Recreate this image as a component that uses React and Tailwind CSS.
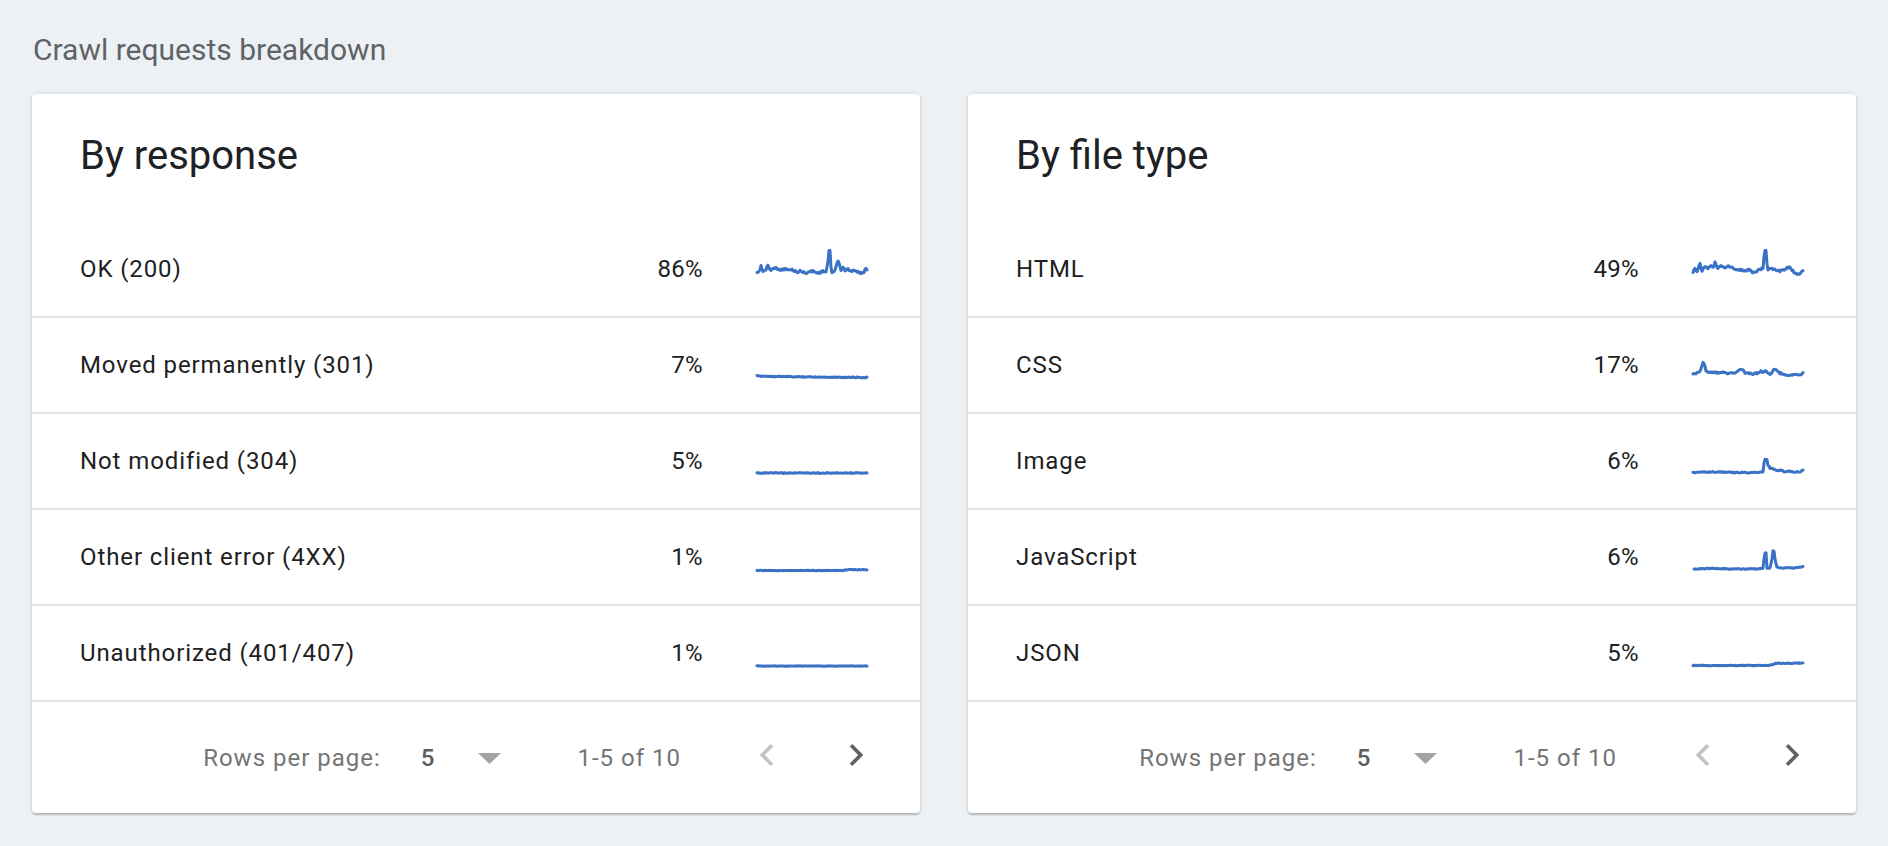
import React from 'react';

const FONT = { fontFamily: 'Roboto, "Liberation Sans", Arial, sans-serif' };

// key points [x, y] in a 110x40 box, jitter added for the noisy look
const byResponse = [
  {
    label: 'OK (200)',
    pct: '86%',
    amp: 2,
    pts: [[0, 24], [3, 21], [4, 17], [6, 22], [9, 21], [11, 16], [13, 21], [16, 20], [19, 18], [22, 21], [28, 20], [32, 21], [36, 21], [40, 23], [44, 22], [48, 24], [52, 23], [56, 22], [60, 24], [64, 23], [67, 22], [69, 23], [71, 12], [72, 1], [73, 1], [74, 18], [75, 24], [77, 22], [79, 18], [81, 12], [82, 14], [84, 21], [86, 18], [88, 22], [91, 20], [94, 22], [97, 21], [100, 23], [104, 24], [107, 23], [109, 19], [110, 20]],
  },
  { label: 'Moved permanently (301)', pct: '7%', amp: 0.8, pts: [[0, 31], [20, 31.5], [60, 32], [110, 32.5]] },
  { label: 'Not modified (304)', pct: '5%', amp: 0.8, pts: [[0, 32], [110, 32]] },
  { label: 'Other client error (4XX)', pct: '1%', amp: 0.5, pts: [[0, 33.5], [85, 33.5], [90, 32.7], [110, 32.7]] },
  { label: 'Unauthorized (401/407)', pct: '1%', amp: 0.4, pts: [[0, 33], [110, 33]] },
];

const byFileType = [
  {
    label: 'HTML',
    pct: '49%',
    amp: 2,
    pts: [[0, 23], [2, 20], [4, 22], [7, 14], [9, 22], [12, 17], [15, 19], [18, 16], [20, 19], [22, 14], [24, 19], [28, 17], [32, 18], [36, 17], [40, 19], [44, 20], [48, 21], [52, 22], [56, 21], [60, 23], [64, 22], [68, 20], [70, 19], [71, 8], [72, 1], [73, 1], [74, 15], [75, 20], [80, 20], [85, 21], [88, 22], [91, 21], [94, 19], [96, 18], [98, 20], [101, 23], [104, 25], [107, 24], [109, 22], [110, 21]],
  },
  {
    label: 'CSS',
    pct: '17%',
    amp: 1.6,
    pts: [[0, 29], [4, 28], [7, 27], [10, 18], [11, 18], [13, 26], [16, 28], [20, 27], [24, 28], [28, 27], [32, 28], [36, 28], [40, 28], [44, 27], [47, 24], [49, 24], [52, 28], [56, 28], [60, 29], [64, 28], [68, 26], [70, 28], [72, 25], [74, 28], [78, 29], [80, 25], [82, 24], [84, 26], [86, 28], [90, 29], [94, 30], [100, 30], [106, 30], [109, 29], [110, 28]],
  },
  {
    label: 'Image',
    pct: '6%',
    amp: 1,
    pts: [[0, 31.5], [20, 31], [40, 31.5], [60, 31.5], [70, 31], [71, 22], [72, 18], [74, 18], [75, 24], [77, 27], [80, 28], [84, 30], [88, 29], [92, 31], [96, 30], [100, 31], [104, 31], [107, 31], [109, 29], [110, 28.5]],
  },
  {
    label: 'JavaScript',
    pct: '6%',
    amp: 0.8,
    pts: [[1, 32], [20, 31.5], [40, 32], [60, 32], [70, 31.5], [71, 22], [72, 16], [73, 16], [74, 31], [77, 31], [79, 22], [80, 14], [81, 14], [82, 22], [83, 27], [84, 30], [88, 31], [95, 31], [100, 31], [106, 30.5], [110, 29.5]],
  },
  { label: 'JSON', pct: '5%', amp: 0.6, pts: [[0, 32.5], [50, 32.5], [70, 32.5], [76, 32.3], [80, 31.5], [82, 30.5], [85, 30.3], [110, 30]] },
];

function jitter(i, seed) {
  const v = Math.sin(i * 12.9898 + seed * 78.233) * 43758.5453;
  return v - Math.floor(v) - 0.5;
}

function sparkPoints(pts, amp, seed) {
  const out = [];
  const start = pts[0][0];
  const end = pts[pts.length - 1][0];
  let k = 0;
  for (let x = start, i = 0; x <= end; x += 1, i++) {
    while (k < pts.length - 2 && x > pts[k + 1][0]) k++;
    const [x0, y0] = pts[k];
    const [x1, y1] = pts[k + 1];
    const t = x1 === x0 ? 0 : (x - x0) / (x1 - x0);
    let y = y0 + (y1 - y0) * t + jitter(i, seed) * amp;
    y = Math.max(1.5, Math.min(38.5, y));
    out.push(`${x.toFixed(1)},${y.toFixed(1)}`);
  }
  return out.join(' ');
}

function Sparkline({ pts, amp, seed }) {
  return (
    <svg width="110" height="40" viewBox="0 0 110 40" className="ml-[54px] mr-[53px] shrink-0 overflow-visible">
      <polyline
        points={sparkPoints(pts, amp, seed)}
        fill="none"
        stroke="#3a72c6"
        strokeWidth="3"
        strokeLinejoin="round"
        strokeLinecap="round"
      />
    </svg>
  );
}

function ChevronLeft({ color }) {
  return (
    <svg width="44" height="44" viewBox="0 0 24 24">
      <path d="M15.41 7.41L14 6l-6 6 6 6 1.41-1.41L10.83 12z" fill={color} />
    </svg>
  );
}

function ChevronRight({ color }) {
  return (
    <svg width="44" height="44" viewBox="0 0 24 24">
      <path d="M10 6L8.59 7.41 13.17 12l-4.58 4.59L10 18l6-6z" fill={color} />
    </svg>
  );
}

function BreakdownCard({ title, rows, seedBase }) {
  return (
    <div className="flex-1 bg-white rounded-[4px] shadow-[0_2px_2px_rgba(0,0,0,0.22),0_0_4px_rgba(0,0,0,0.10)]">
      {/* Header */}
      <div className="h-[128px] pl-12 pt-[38px]">
        <h2 className="text-[40px] leading-[48px] text-[#202124] font-normal">{title}</h2>
      </div>

      {/* Rows */}
      {rows.map((row, i) => (
        <div key={row.label} className="h-[96px] flex items-center pl-12 border-b-2 border-[#e3e3e3]">
          <span className="flex-1 text-[24px] leading-[32px] tracking-[0.9px] text-[#212121]">{row.label}</span>
          <span className="text-[24px] leading-[32px] tracking-[0.3px] text-[#212121] text-right">{row.pct}</span>
          <Sparkline pts={row.pts} amp={row.amp} seed={seedBase + i} />
        </div>
      ))}

      {/* Pagination */}
      <div className="h-[111px] flex items-center justify-end pr-[42px] text-[24px] leading-[32px] tracking-[1px]">
        <span className="text-[#757575]">Rows per page:</span>
        <span className="ml-[40px] text-[#5f5f5f] font-medium">5</span>
        <svg width="23" height="11" viewBox="0 0 23 11" className="ml-[43px] mt-[2px]">
          <polygon points="0,0 23,0 11.5,11" fill="#a3a3a3" />
        </svg>
        <span className="ml-[76px] text-[#757575]">1-5 of 10</span>
        <div className="ml-[64px] flex items-center gap-[45px] -mt-[6px]">
          <ChevronLeft color="#c2c2c2" />
          <ChevronRight color="#5f6368" />
        </div>
      </div>
    </div>
  );
}

export default function App() {
  return (
    <div className="min-h-screen bg-[#eef1f4] px-8 pt-[32px] pb-[33px]" style={FONT}>
      <h1 className="text-[30px] leading-[36px] text-[#5f6368] font-normal pl-px">Crawl requests breakdown</h1>
      <div className="mt-[26px] flex gap-12">
        <BreakdownCard title="By response" rows={byResponse} seedBase={1} />
        <BreakdownCard title="By file type" rows={byFileType} seedBase={11} />
      </div>
    </div>
  );
}
